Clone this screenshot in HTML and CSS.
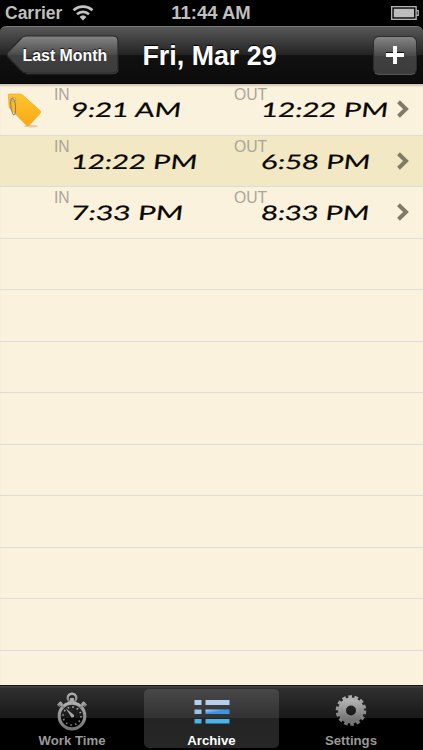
FILE: index.html
```html
<!DOCTYPE html>
<html lang="en">
<head>
    <meta charset="UTF-8">
    <meta name="viewport" content="width=device-width, initial-scale=1.0">
    <title>Archive - Fri, Mar 29</title>
    <link rel="stylesheet" href="styles.css">
</head>
<body>
    <div class="status-bar">
        <div class="carrier">
            <span>Carrier</span>
            <svg class="wifi" width="22" height="16" viewBox="0 0 22 16" fill="none" stroke="#c3c3c3">
                <path d="M1.5 5.3a14 14 0 0 1 19 0" stroke-width="2.6"/>
                <path d="M5 9.2a8.8 8.8 0 0 1 12 0" stroke-width="2.6"/>
                <path d="M11 15.5l-3.4-3.6a5 5 0 0 1 6.8 0z" fill="#c3c3c3" stroke="none"/>
            </svg>
        </div>
        <span class="clock">11:44 AM</span>
        <svg class="battery" width="29" height="14" viewBox="0 0 29 14">
            <rect x=".7" y=".7" width="24.4" height="12.6" fill="none" stroke="#bdbdbd" stroke-width="1.3"/>
            <rect x="2.7" y="2.7" width="20.4" height="8.6" fill="#bdbdbd"/>
            <path d="M25.5 4.7h1.7v4.6h-1.7" fill="none" stroke="#bdbdbd" stroke-width="1.2"/>
        </svg>
    </div>

    <div class="nav-bar">
        <a class="back">
            <svg class="back-shape" width="114" height="40" viewBox="0 0 114 40">
                <defs>
                    <linearGradient id="backFill" x1="0" y1="0" x2="0" y2="1">
                        <stop offset="0" stop-color="#858585"/>
                        <stop offset=".5" stop-color="#4b4b4b"/>
                        <stop offset=".51" stop-color="#404040"/>
                        <stop offset="1" stop-color="#3c3c3c"/>
                    </linearGradient>
                </defs>
                <path d="M20 1H107q5 0 5 5V33q0 5-5 5H20q-3 0-5-2.500L2 22q-2-2.500 0-5L15 3.500q2-2.500 5-2.500z" fill="url(#backFill)" stroke="#282828" stroke-width="1.2"/>
                <path d="M20 38.800H107q4.500 0 5.500-4" fill="none" stroke="#555" stroke-width=".7"/>
            </svg>
            <span>Last Month</span>
        </a>
        <h1>Fri, Mar 29</h1>
        <a class="add">
            <svg width="18" height="19" viewBox="0 0 18 19">
                <path d="M0 6h18v4H0zM7 0h4v18H7z" fill="#111"/>
                <path d="M0 7h18v4H0zM7 0h4v18H7z" fill="#fff"/>
            </svg>
        </a>
    </div>

    <div class="list">
        <div class="row">
            <svg class="tag" width="36" height="36" viewBox="0 0 36 36">
                <defs>
                    <linearGradient id="tagFill" x1="0" y1="0" x2="0" y2="1">
                        <stop offset="0" stop-color="#fdc42f"/>
                        <stop offset="1" stop-color="#f9a916"/>
                    </linearGradient>
                </defs>
                <ellipse cx="24" cy="34.200" rx="7" ry="1.200" fill="#b8a77a" opacity=".5"/>
                <path d="M1.300 3q0-1 1-1H13q1.500 0 2.500 1L33 18.500q1.500 1.500 0 3L22.500 33q-1.700 1.700-3.400 0L3 16.500q-1-1-1-2z" fill="url(#tagFill)" stroke="#e9a31c" stroke-width=".6"/>
                <circle cx="6.800" cy="7.500" r="2" fill="#f7edc8" stroke="#b98a24" stroke-width=".7"/>
                <path d="M7 8.500Q4 3.500 3.600 10q0 8 2.400 12.500q2 2 2.600-4Q9 11 6.600 6.500" fill="none" stroke="#8a7a58" stroke-width="1"/>
            </svg>
            <div class="cell in"><span class="label">IN</span>
                <svg class="time" width="130" height="34"><text x="0" y="24" textLength="110" lengthAdjust="spacingAndGlyphs">9:21 AM</text></svg></div>
            <div class="cell out"><span class="label">OUT</span>
                <svg class="time" width="130" height="34"><text x="0" y="24" textLength="127" lengthAdjust="spacingAndGlyphs">12:22 PM</text></svg></div>
            <svg class="arrow" width="12" height="18" viewBox="0 0 12 18"><path d="M1.500 1.700L9 9l-7.500 7.300" fill="none" stroke="#827a68" stroke-width="4"/></svg>
        </div>
        <div class="row alt">
            <div class="cell in"><span class="label">IN</span>
                <svg class="time" width="130" height="34"><text x="0" y="24" textLength="126" lengthAdjust="spacingAndGlyphs">12:22 PM</text></svg></div>
            <div class="cell out"><span class="label">OUT</span>
                <svg class="time" width="130" height="34"><text x="0" y="24" textLength="109" lengthAdjust="spacingAndGlyphs">6:58 PM</text></svg></div>
            <svg class="arrow" width="12" height="18" viewBox="0 0 12 18"><path d="M1.500 1.700L9 9l-7.500 7.300" fill="none" stroke="#827a68" stroke-width="4"/></svg>
        </div>
        <div class="row">
            <div class="cell in"><span class="label">IN</span>
                <svg class="time" width="130" height="34"><text x="0" y="24" textLength="112" lengthAdjust="spacingAndGlyphs">7:33 PM</text></svg></div>
            <div class="cell out"><span class="label">OUT</span>
                <svg class="time" width="130" height="34"><text x="0" y="24" textLength="108" lengthAdjust="spacingAndGlyphs">8:33 PM</text></svg></div>
            <svg class="arrow" width="12" height="18" viewBox="0 0 12 18"><path d="M1.500 1.700L9 9l-7.500 7.300" fill="none" stroke="#827a68" stroke-width="4"/></svg>
        </div>
        <!-- empty rows -->
        <div class="row"></div>
        <div class="row"></div>
        <div class="row"></div>
        <div class="row"></div>
        <div class="row"></div>
        <div class="row"></div>
        <div class="row"></div>
        <div class="row"></div>
        <div class="row"></div>
    </div>

    <div class="tab-bar">
        <a class="tab">
            <svg width="34" height="40" viewBox="0 0 34 40">
                <defs>
                    <linearGradient id="grey" x1="0" y1="0" x2="0" y2="1">
                        <stop offset="0" stop-color="#b0b0b0"/>
                        <stop offset="1" stop-color="#747474"/>
                    </linearGradient>
                </defs>
                <g fill="none" stroke="url(#grey)">
                    <circle cx="17" cy="6" r="4.300" stroke-width="2.400"/>
                    <circle cx="17" cy="24" r="12.800" stroke-width="3.200"/>
                    <circle cx="17" cy="24" r="9" stroke-width="1.700" stroke-dasharray="1.600 3.112"/>
                    <path d="M3.200 14l3.500-3.500M27.300 10.500l3.500 3.500" stroke-width="3.800"/>
                    <path d="M6 12.500l3 3M28 12.500l-3 3" stroke-width="2.200"/>
                </g>
                <path d="M15 6h4v6h-4z" fill="#a8a8a8"/>
                <path d="M10.500 16l8.500 7q.5 2.800-2.500 2.500z" fill="#a5a5a5"/>
            </svg>
            <span>Work Time</span>
        </a>
        <a class="tab active">
            <svg width="36" height="40" viewBox="0 0 36 40">
                <defs>
                    <linearGradient id="blue" x1="0" y1="0" x2="1" y2="1">
                        <stop offset="0" stop-color="#b3d5f5"/>
                        <stop offset=".5" stop-color="#3a92e6"/>
                        <stop offset="1" stop-color="#4795e2"/>
                    </linearGradient>
                </defs>
                <path d="M.5 8h7v5h-7zM11.500 8h24v5h-24z" fill="#b4d0ee"/>
                <path d="M.5 17.500h7v4.500h-7z" fill="#98c4ed"/>
                <path d="M11.500 17.500h24v4.500h-24z" fill="url(#blue)"/>
                <path d="M.5 27h7v4.500h-7zM11.500 27h24v4.500h-24z" fill="#48b4ea"/>
            </svg>
            <span>Archive</span>
        </a>
        <a class="tab">
            <svg class="gear" width="34" height="40" viewBox="0 0 34 40">
                <g fill="none" stroke="url(#grey)">
                    <circle cx="17" cy="21.500" r="9" stroke-width="8"/>
                    <circle cx="17" cy="21.500" r="13.800" stroke-width="3" stroke-dasharray="3.700 2.493"/>
                </g>
            </svg>
            <span>Settings</span>
        </a>
    </div>
</body>
</html>
```
FILE: styles.css
```css
* {
    box-sizing: border-box;
}
body {
    margin: 0;
    width: 423px;
    height: 750px;
    overflow: hidden;
    display: flex;
    flex-direction: column;
    background: #000;
    font-family: "Liberation Sans", Arial, sans-serif;
}
svg {
    display: block;
    flex-shrink: 0;
}
.status-bar {
    height: 26px;
    flex-shrink: 0;
    display: grid;
    grid-template-columns: 1fr auto 1fr;
    align-items: center;
    padding: 0 3px 0 5px;
    color: #bfbfbf;
    font-size: 17.5px;
    font-weight: bold;
}
.carrier {
    display: flex;
    align-items: center;
    gap: 10px;
}
.clock {
    padding-right: 3px;
    font-size: 18.5px;
}
.battery {
    justify-self: end;
}
.nav-bar {
    height: 58px;
    flex-shrink: 0;
    display: grid;
    grid-template-columns: 114px 1fr 44px;
    align-items: center;
    padding: 0 6px;
    border-top: 1px solid #777;
    border-bottom: 1px solid #000;
    border-radius: 6px 6px 0 0;
    background: linear-gradient(#575757, #232323 50%, #111 51%, #0b0b0b);
    color: #fff;
}
.back {
    display: grid;
    align-items: center;
    font-size: 15.9px;
    font-weight: bold;
    text-shadow: 0 -1px 1px #111;
}
.back-shape, .back span {
    grid-area: 1 / 1;
}
.back span {
    padding: 1px 0 0 16.5px;
    white-space: nowrap;
}
h1 {
    margin: 1px 0 0 22.5px;
    font-size: 26.8px;
    line-height: 30px;
    text-shadow: 0 -1px 1px #000;
    white-space: nowrap;
}
.add {
    width: 44px;
    height: 39px;
    display: flex;
    align-items: center;
    justify-content: center;
    border: 1px solid #2c2c2c;
    border-bottom-color: #555;
    border-radius: 6px;
    background: linear-gradient(#858585, #4b4b4b 50%, #404040 51%, #3c3c3c);
}
.list {
    flex: 1;
    min-height: 0;
    overflow: hidden;
    background: #faf2dd;
    box-shadow: inset 0 3px 2px -1px #cfc5b0;
}
.row {
    height: 51.5px;
    display: grid;
    grid-template-columns: 54px 180px 162px 1fr;
    border-bottom: 1px solid #dedcd9;
}
.alt {
    background: #f2e8c3;
}
.tag {
    grid-column: 1;
    grid-row: 1;
    margin: 8px 0 0 7px;
}
.cell {
    display: flex;
    align-items: flex-start;
    padding-top: 2px;
    grid-row: 1;
}
.in {
    grid-column: 2;
}
.out {
    grid-column: 3;
}
.label {
    width: 17px;
    color: #aaa59b;
    font-size: 15.7px;
    line-height: 18px;
}
.out .label {
    width: 27px;
}
.time {
    margin-top: 7px;
    overflow: visible;
}
.time text {
    font-family: "Bradley Hand", Lato, sans-serif;
    font-size: 20px;
    fill: #090703;
    stroke: #090703;
    stroke-width: .2px;
    transform: translateX(2.5px) skewX(-7deg);
}
.arrow {
    grid-column: 4;
    grid-row: 1;
    margin: 16px 0 0 1px;
}
.tab-bar {
    height: 65px;
    flex-shrink: 0;
    display: grid;
    grid-template-columns: 135px 135px 135px;
    justify-content: center;
    column-gap: 4.5px;
    padding: 3px 0 3px;
    border-top: 1px solid #161616;
    background: linear-gradient(#434343 1px, #303030 2px, #181818 32px, #000 32px);
}
.tab {
    display: flex;
    flex-direction: column;
    align-items: center;
    border-radius: 5px;
    color: #999;
    font-size: 13.2px;
    font-weight: bold;
    line-height: 15px;
}
.tab svg {
    margin-top: 3px;
    margin-bottom: 1px;
}
.tab .gear {
    margin-top: 0;
    margin-bottom: 4px;
}
.active {
    color: #fff;
    background: linear-gradient(#484848, #323232 29px, #242424 29px, #262626);
}
```
